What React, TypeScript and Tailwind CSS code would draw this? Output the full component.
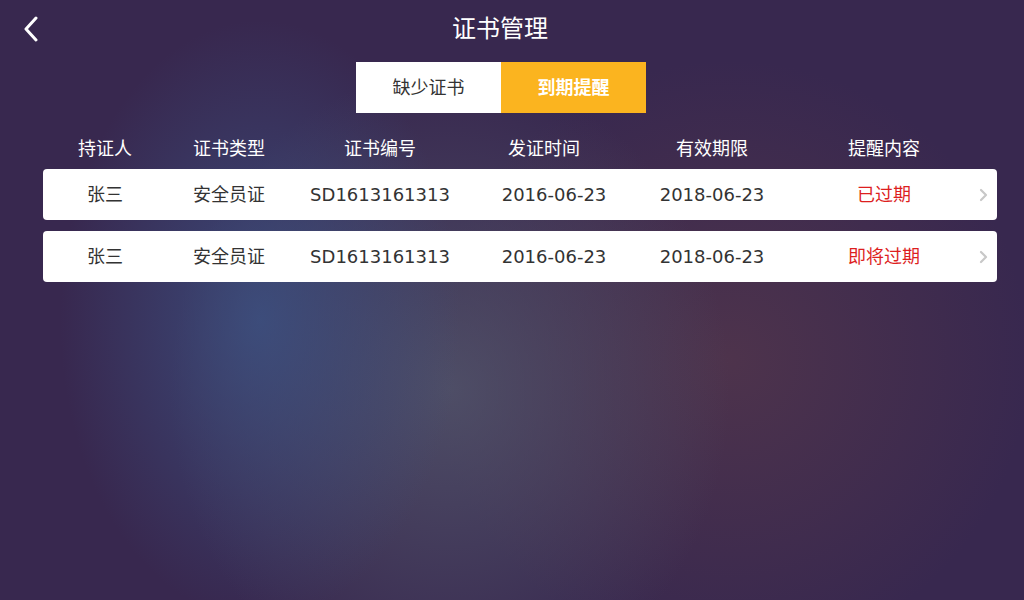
import React from "react";

const cols = "grid grid-cols-[124px_124px_178px_150px_186px_158px_1fr] items-center";

const rows = [
  { name: "张三", type: "安全员证", no: "SD1613161313", issue: "2016-06-23", exp: "2018-06-23", note: "已过期" },
  { name: "张三", type: "安全员证", no: "SD1613161313", issue: "2016-06-23", exp: "2018-06-23", note: "即将过期" },
];

export default function App() {
  return (
    <div
      className="w-[1024px] h-[600px] overflow-hidden text-white flex flex-col bg-[#38284f] bg-[radial-gradient(ellipse_200px_300px_at_260px_320px,rgba(60,85,135,0.75),transparent),radial-gradient(ellipse_280px_320px_at_450px_390px,rgba(85,90,110,0.75),transparent),radial-gradient(ellipse_300px_300px_at_730px_360px,rgba(85,55,75,0.75),transparent)]"
      style={{ fontFamily: '"DejaVu Sans", "Noto Sans CJK SC", sans-serif' }}
    >
      <div className="relative h-[60px] flex items-center justify-center shrink-0 pr-[24px] pb-[2px]">
        <button className="absolute left-[20px] top-[16px] w-[22px] h-[26px] flex items-center justify-center">
          <svg width="16" height="26" viewBox="0 0 16 26" fill="none">
            <polyline points="13,2 3,13 13,24" stroke="white" strokeWidth="3" strokeLinecap="round" strokeLinejoin="round" />
          </svg>
        </button>
        <div className="text-[24px] leading-none">证书管理</div>
      </div>
      <div className="flex justify-center mt-[2px] pr-[22px]">
        <div className="w-[145px] h-[51px] bg-white text-[#333] text-[18px] flex items-center justify-center">缺少证书</div>
        <div className="w-[145px] h-[51px] bg-[#fbb41f] text-white font-bold text-[18px] flex items-center justify-center">到期提醒</div>
      </div>
      <div className="mx-[43px] w-[954px]">
        <div className={`${cols} h-[56px] pt-[14px] text-[18px] text-center`}>
          <div>持证人</div>
          <div>证书类型</div>
          <div>证书编号</div>
          <div>发证时间</div>
          <div>有效期限</div>
          <div>提醒内容</div>
          <div />
        </div>
        <div className="flex flex-col gap-[11px]">
          {rows.map((r, i) => (
            <div key={i} className={`${cols} h-[51px] bg-white rounded-[4px] text-[18px] text-[#333] text-center`}>
              <div>{r.name}</div>
              <div>{r.type}</div>
              <div>{r.no}</div>
              <div className="pl-[20px]">{r.issue}</div>
              <div>{r.exp}</div>
              <div className="text-[#dd1f1f]">{r.note}</div>
              <div className="flex justify-end pr-[9px]">
                <svg width="10" height="14" viewBox="0 0 10 14" fill="none">
                  <polyline points="3,2 8,7 3,12" stroke="#c8c8c8" strokeWidth="2.2" strokeLinecap="round" strokeLinejoin="round" />
                </svg>
              </div>
            </div>
          ))}
        </div>
      </div>
    </div>
  );
}
